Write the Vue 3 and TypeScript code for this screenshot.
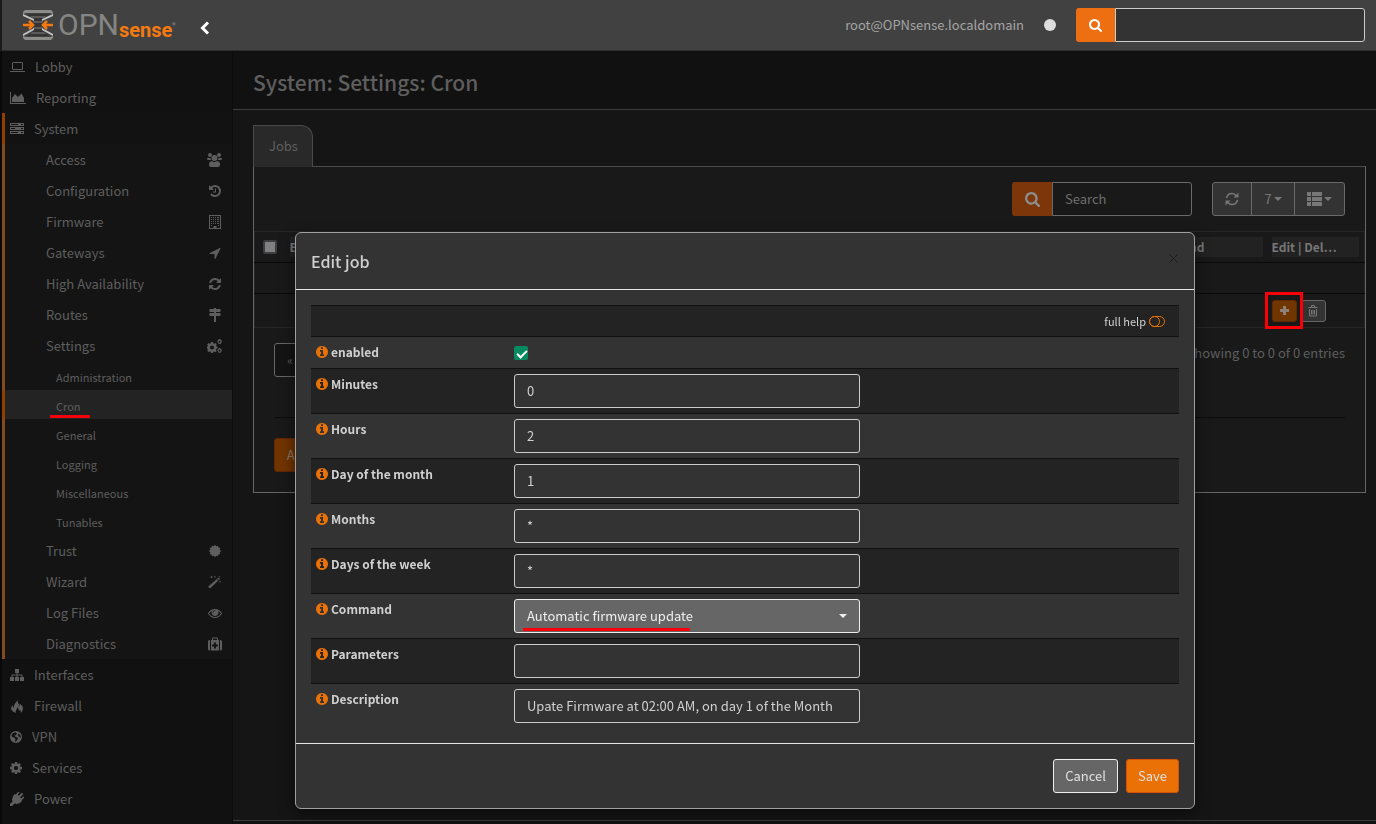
<script setup lang="ts">
import { ref } from 'vue'

interface Glyph {
  w: number
  d: string
  box?: string
  line?: boolean
}

function starburst(points: number, outer: number, inner: number, c: number): string {
  const parts: string[] = []
  for (let i = 0; i < points * 2; i++) {
    const r = i % 2 === 0 ? outer : inner
    const a = (Math.PI * i) / points
    parts.push(`${(c + r * Math.sin(a)).toFixed(2)} ${(c - r * Math.cos(a)).toFixed(2)}`)
  }
  return `M${parts.join('L')}z`
}

const glyphs: Record<string, Glyph> = {
  laptop: { w: 15, box: '0 0 15 14', d: 'M3 2.5h9q.5 0 .5.5v6q0 .5-.5.5H3q-.5 0-.5-.5V3q0-.5.5-.5zM0 11.500h15', line: true },
  area: { w: 16, box: '0 0 16 14', d: 'M0 1h1v11h15v1H0zM2 11V7l3-4 3 3 3.500-3.500L14 7v4z' },
  server: {
    w: 14,
    box: '0 0 14 14',
    d: 'M0 1h14v3H0zM0 5h14v3H0zM0 9h14v3H0zM1 2v1h7V2zM1 6v1h4V6zM1 10v1h7v-1zM11 2v1h2V2zM11 6v1h2V6zM11 10v1h2v-1z'
  },
  users: {
    w: 15,
    box: '0 0 15 14',
    d: 'M7.500 2a3 3 0 1 1 0 6 3 3 0 0 1 0-6zM3 0a2 2 0 1 1 0 4 2 2 0 0 1 0-4zM12 0a2 2 0 1 1 0 4 2 2 0 0 1 0-4zM4.500 8q3 2 6 0 2.500.5 2.500 4 0 2-2 2H4q-2 0-2-2 0-3.500 2.500-4zM1 4.500q1.500 1 2.500.3Q3.500 6.500 4.500 7H1.500Q0 7 0 6q0-1 1-1.500zM14 4.500q-1.500 1-2.500.3 0 1.700-1 2.200h3Q15 7 15 6q0-1-1-1.500z'
  },
  history: {
    w: 12,
    box: '128 128 1536 1536',
    d: 'M1664 896q0 156-61 298t-164 245-245 164-298 61q-172 0-327-72.500t-264-204.500q-7-10-6.500-22.500t8.500-20.500l137-138q10-9 25-9 16 2 23 12 73 95 179 147t225 52q104 0 198.500-40.500t163.500-109.500 109.500-163.500 40.500-198.500-40.500-198.500-109.500-163.500-163.500-109.500-198.500-40.500q-98 0-188 35.500t-160 101.500l137 138q31 30 14 69-17 40-59 40h-448q-26 0-45-19t-19-45v-448q0-42 40-59 39-17 69 14l130 129q107-101 244.500-156.500t284.500-55.500q156 0 298 61t245 164 164 245 61 298zm-640-288v448q0 14-9 23t-23 9h-320q-14 0-23-9t-9-23v-64q0-14 9-23t23-9h224v-352q0-14 9-23t23-9h64q14 0 23 9t9 23z'
  },
  building: {
    w: 12,
    box: '0 0 12 14',
    d: 'M0 0h12v14H0zM1 1v12h3.500v-2h3v2H11V1zM2 2h1v1H2zM4 2h1v1H4zM6 2h1v1H6zM8 2h2v1H8zM2 4h1v1H2zM4 4h1v1H4zM6 4h1v1H6zM8 4h2v1H8zM2 6h1v1H2zM4 6h1v1H4zM6 6h1v1H6zM8 6h2v1H8zM2 8h1v1H2zM4 8h1v1H4zM6 8h1v1H6zM8 8h2v1H8zM2 10h1v1H2zM9 10h1v1H9z'
  },
  arrow: {
    w: 12,
    box: '128 128 1536 1536',
    d: 'M1593 349l-640 1280q-17 35-57 35-5 0-15-2-22-5-35.500-22.500t-13.500-39.500v-576h-576q-22 0-39.500-13.500t-22.500-35.500 4-42 29-30l1280-640q13-7 29-7 27 0 45 19 15 14 18.500 34.500t-6.500 39.500z'
  },
  refresh: {
    w: 12,
    box: '128 128 1536 1536',
    d: 'M1639 1056q0 5-1 7-64 268-268 434.500t-478 166.500q-146 0-282.500-55t-243.500-157l-129 129q-19 19-45 19t-45-19-19-45v-448q0-26 19-45t45-19h448q26 0 45 19t19 45-19 45l-137 137q71 66 161 102t187 36q134 0 250-65t186-179q11-17 53-117 8-23 30-23h192q13 0 22.500 9.500t9.500 22.500zm25-800v448q0 26-19 45t-45 19h-448q-26 0-45-19t-19-45 19-45l138-138q-148-137-349-137-134 0-250 65t-186 179q-11 17-53 117-8 23-30 23h-199q-13 0-22.500-9.500t-9.500-22.500v-7q65-268 270-434.500t480-166.500q146 0 284 55.500t245 156.500l130-129q19-19 45-19t45 19 19 45z'
  },
  signs: { w: 12, box: '0 0 12 14', d: 'M5 0h2v1h4l1 1.500L11 4H7v1h4.500v3H7v6H5V8H1L0 6.500 1 5h4V4H.5V1H5z' },
  cogs: {
    w: 15,
    box: '0 0 15 14',
    d: 'M4 3h2l.3 1.300 1 .4L8.500 4l1.300 1.400-.7 1 .4 1L10.500 7.700v1.800l-1.200.3-.4 1 .7 1.100-1.300 1.300-1.200-.7-1 .4L6 14H4l-.3-1.200-1-.4-1.200.7L.2 11.800l.7-1.100-.4-1L0 9.500V7.700l.5-.3.4-1-.7-1L1.500 4l1.200.7 1-.4zM5 6.500a2 2 0 1 0 0 4 2 2 0 0 0 0-4zM11.700 0h1.600l.2.800 1 .5.5 1.700-.8.7-.5 1.300h-2l-.7-1.200-.8-.8.5-1.700 1-.5zM12.500 1.800a1 1 0 1 0 0 2 1 1 0 0 0 0-2zM11.700 9h1.600l.2.800 1 .5.5 1.400-.8.800-.5 1.200h-2l-.7-1.200-.8-.8.5-1.400 1-.5zM12.500 10.500a1 1 0 1 0 0 2 1 1 0 0 0 0-2z'
  },
  seal: { w: 12, box: '0 0 12 12', d: starburst(12, 6.2, 4.8, 6) },
  magic: { w: 13, box: '0 0 13 13', d: 'M10.500 2 12 3.500 2 13 0 11.300zM9 4.500l.8.800 1-1-.8-.8zM3 1l.5-1L4 1l1 .5-1 .5-.5 1L3 2l-1-.5zM6.500 1l.4-1 .4 1 .7.400-.7.400-.4 1-.4-1-.7-.4zM12 5l.4.800.6.300-.6.300L12 7.200l-.4-.8-.6-.3.600-.3zM11.600 0l.3.700.7.300-.7.300-.3.700-.3-.7-.7-.3.700-.3z' },
  eye: {
    w: 14,
    box: '0 0 1792 1792',
    d: 'M1664 960q-152-236-381-353 61 104 61 225 0 185-131.500 316.500t-316.500 131.500-316.500-131.500-131.500-316.500q0-121 61-225-229 117-381 353 133 205 333.500 326.500t434.500 121.500 434.500-121.500 333.500-326.500zm-720-384q0-20-14-34t-34-14q-125 0-214.500 89.500t-89.500 214.500q0 20 14 34t34 14 34-14 14-34q0-86 61-147t147-61q20 0 34-14t14-34zm848 384q0 34-20 69-140 230-376.500 368.500t-499.500 138.500-499.500-139-376.500-368q-20-35-20-69t20-69q140-229 376.500-368t499.500-139 499.500 139 376.500 368q20 35 20 69z'
  },
  medkit: { w: 14, box: '0 0 14 13', d: 'M4 2.500V1q0-1 1-1h4q1 0 1 1v1.500h1V13H3V2.500zM5 1v1.500h4V1zM2 2.500V13H1.500Q0 13 0 11.500V4q0-1.500 1.500-1.500zM12 2.500h.5Q14 2.500 14 4v7.500q0 1.500-1.500 1.500H12zM6 5v2H4v2h2v2h2V9h2V7H8V5z' },
  sitemap: { w: 14, box: '0 0 14 12', d: 'M5 0h4v4H7.500v1.500H12q.5 0 .5.500v2H14v4h-4V8h1.500V6.500h-4V8H9v4H5V8h1.500V6.500h-4V8H4v4H0V8h1.500V6q0-.5.5-.5h4.500V4H5z' },
  fire: { w: 14, box: '0 0 14 14', d: 'M7.500 0Q7 2 8 3.500 9.500 5.500 8.500 7.500 10 7 9.700 4.500 12.500 6.500 13 9q.3 3-2.500 5 .8-2-.5-3.500-.3 1.200-1 1.500Q9 9.500 7 8q.5 2-.8 3-1 1.200-.2 3-3-1-4.500-3-1-2.500 1-5Q2.500 8 4 9q-.5-2.500 1-4.500Q7.500 2.500 7.500 0z' },
  globe: { w: 12, box: '0 0 12 12', d: 'M6 0a6 6 0 1 1 0 12A6 6 0 0 1 6 0zM5.500 1.200Q3 1.500 1.800 3.500L1.500 5l1.500 1.500 1.500.3 1 1.200-.6 2.500h1l2.200-2.700-.8-1.600L5 5.500 4.500 4.500 6 4l1-1.300zM9 2.500 7.800 4l1 1.500L10.800 7q.2-2.500-1.800-4.500z' },
  cog: {
    w: 12,
    box: '128 128 1536 1536',
    d: 'M1152 896q0-106-75-181t-181-75-181 75-75 181 75 181 181 75 181-75 75-181zm512-109v222q0 12-8 23t-20 13l-185 28q-19 54-39 91 35 50 107 138 10 12 10 25t-9 23q-27 37-99 108t-94 71q-12 0-26-9l-138-108q-44 23-91 38-16 136-29 186-7 28-36 28h-222q-14 0-24.500-8.500t-11.500-21.500l-28-184q-49-16-90-37l-141 107q-10 9-25 9-14 0-25-11-126-114-165-168-7-10-7-23 0-12 8-23 15-21 51-66.500t54-70.500q-27-50-41-99l-183-27q-13-2-21-12.500t-8-23.500v-222q0-12 8-23t19-13l186-28q14-46 39-92-40-57-107-138-10-12-10-24 0-10 9-23 26-36 98.500-107.500t94.500-71.500q13 0 26 10l138 107q44-23 91-38 16-136 29-186 7-28 36-28h222q14 0 24.500 8.500t11.500 21.500l28 184q49 16 90 37l142-107q9-9 24-9 13 0 25 10 129 119 165 170 7 8 7 22 0 12-8 23-15 21-51 66.500t-54 70.500q26 50 41 98l183 28q13 2 21 12.500t8 23.500z'
  },
  plug: { w: 14, box: '0 0 14 14', d: 'M12.700 1.300q.7.700 0 1.400L10.200 5.200l1.200 1.200L13 4.800q.5-.4 1 0 .4.600 0 1.100l-2.400 2.400q.6.600.3 1Q8.500 13 4.500 11.500L2 14H0v-2l2.500-2.500Q1 5.500 4.700 2.100q.4-.3 1 .3L8.100 0q.5-.4 1.100 0 .4.500 0 1L7.600 2.600l1.200 1.200 2.500-2.500q.7-.7 1.400 0z' },
  help: { w: 12, box: '0 0 12 12', d: 'M6 0a6 6 0 1 1 0 12A6 6 0 0 1 6 0z' },
  info: {
    w: 12,
    box: '128 128 1536 1536',
    d: 'M1152 1376v-160q0-14-9-23t-23-9h-96v-512q0-14-9-23t-23-9h-320q-14 0-23 9t-9 23v160q0 14 9 23t23 9h96v320h-96q-14 0-23 9t-9 23v160q0 14 9 23t23 9h448q14 0 23-9t9-23zm-128-896v-160q0-14-9-23t-23-9h-192q-14 0-23 9t-9 23v160q0 14 9 23t23 9h192q14 0 23-9t9-23zm640 416q0 209-103 385.500t-279.500 279.500-385.500 103-385.500-103-279.500-279.500-103-385.500 103-385.500 279.500-279.500 385.500-103 385.500 103 279.500 279.500 103 385.500z'
  },
  search: {
    w: 14,
    box: '64 128 1664 1664',
    d: 'M1216 832q0-185-131.500-316.500t-316.500-131.500-316.500 131.500-131.500 316.500 131.500 316.500 316.500 131.500 316.500-131.500 131.500-316.500zm512 832q0 52-38 90t-90 38q-54 0-90-38l-343-342q-179 124-399 124-143 0-273.500-55.500t-225-150-150-225-55.500-273.500 55.500-273.500 150-225 225-150 273.500-55.500 273.500 55.500 225 150 150 225 55.500 273.500q0 220-124 399l343 343q37 37 37 90z'
  }
}

interface Entry {
  label: string
  icon: string
}

const before: Entry[] = [
  { label: 'Lobby', icon: 'laptop' },
  { label: 'Reporting', icon: 'area' }
]
const systemTop: Entry[] = [
  { label: 'Access', icon: 'users' },
  { label: 'Configuration', icon: 'history' },
  { label: 'Firmware', icon: 'building' },
  { label: 'Gateways', icon: 'arrow' },
  { label: 'High Availability', icon: 'refresh' },
  { label: 'Routes', icon: 'signs' },
  { label: 'Settings', icon: 'cogs' }
]
const settings: string[] = ['Administration', 'Cron', 'General', 'Logging', 'Miscellaneous', 'Tunables']
const systemBottom: Entry[] = [
  { label: 'Trust', icon: 'seal' },
  { label: 'Wizard', icon: 'magic' },
  { label: 'Log Files', icon: 'eye' },
  { label: 'Diagnostics', icon: 'medkit' }
]
const after: Entry[] = [
  { label: 'Interfaces', icon: 'sitemap' },
  { label: 'Firewall', icon: 'fire' },
  { label: 'VPN', icon: 'globe' },
  { label: 'Services', icon: 'cog' },
  { label: 'Power', icon: 'plug' }
]

interface Field {
  id: string
  label: string
  kind: 'check' | 'text' | 'select'
  value: string
}

const fields = ref<Field[]>([
  { id: 'enabled', label: 'enabled', kind: 'check', value: '' },
  { id: 'minutes', label: 'Minutes', kind: 'text', value: '0' },
  { id: 'hours', label: 'Hours', kind: 'text', value: '2' },
  { id: 'days', label: 'Day of the month', kind: 'text', value: '1' },
  { id: 'months', label: 'Months', kind: 'text', value: '*' },
  { id: 'weekdays', label: 'Days of the week', kind: 'text', value: '*' },
  { id: 'command', label: 'Command', kind: 'select', value: 'Automatic firmware update' },
  { id: 'parameters', label: 'Parameters', kind: 'text', value: '' },
  { id: 'description', label: 'Description', kind: 'text', value: 'Upate Firmware at 02:00 AM, on day 1 of the Month' }
])
const enabled = ref(true)
</script>

<template>
  <div class="page">
    <header class="topbar">
      <a class="logo" href="#" aria-label="OPNsense">
        <svg width="32" height="32" viewBox="0 0 32 32" aria-hidden="true">
          <path d="M5 5h22l-5 4v14l5 4H5l5-4V9z" fill="#343434" />
          <path d="M8 7h16l-2 2H10zM11 12h10v2H11zM11 18h10v2H11zM10 23h12l2 2H8z" fill="#5a5a5a" />
          <path d="M3 1h26l2 2v2l-3-1H4L1 5V3zM3 31h26l2-2v-2l-3 1H4l-3-1v2z" fill="#8c8c8a" />
          <path d="M1 5l11 5v2L1 7zM31 5l-11 5v2l11-5zM1 27l11-6v-2L1 25zM31 27l-11-6v-2l11 6z" fill="#c4c4c4" />
          <path d="M1 16h9M31 16h-9M7 12l4 4-4 4M25 12l-4 4 4 4" fill="none" stroke="#f47a10" stroke-width="2.500" />
        </svg>
        <span class="opn">OPN</span><span class="sense">sense</span><span class="reg">®</span>
      </a>
      <button class="collapse" type="button" aria-label="Collapse menu">
        <svg width="10" height="14" viewBox="0 0 10 14"><path d="M8 1.500 2.500 7 8 12.500" fill="none" stroke="#fff" stroke-width="3" /></svg>
      </button>
      <span class="who">root@OPNsense.localdomain</span>
      <span class="dot"></span>
      <form class="quick" @submit.prevent>
        <button class="find" type="submit" aria-label="Search menu">
          <svg width="13" height="13" :viewBox="glyphs.search.box"><path :d="glyphs.search.d" /></svg>
        </button>
        <input type="text" aria-label="Quick search" />
      </form>
    </header>

    <div class="body">
      <nav class="side">
        <a v-for="e in before" :key="e.label" href="#" class="item">
          <svg :width="glyphs[e.icon].w" height="14" :viewBox="glyphs[e.icon].box" :class="{ line: glyphs[e.icon].line }"><path :d="glyphs[e.icon].d" /></svg>
          {{ e.label }}
        </a>
        <div class="group">
          <a href="#" class="item open">
            <svg width="14" height="14" :viewBox="glyphs.server.box"><path :d="glyphs.server.d" /></svg>
            System
          </a>
          <a v-for="e in systemTop" :key="e.label" href="#" class="item sub">
            <span>{{ e.label }}</span>
            <span class="ico"><svg :width="glyphs[e.icon].w" height="14" :viewBox="glyphs[e.icon].box"><path :d="glyphs[e.icon].d" /></svg></span>
          </a>
          <a v-for="s in settings" :key="s" href="#" class="leaf" :class="{ active: s === 'Cron' }"><span>{{ s }}</span></a>
          <a v-for="e in systemBottom" :key="e.label" href="#" class="item sub">
            <span>{{ e.label }}</span>
            <span class="ico"><svg :width="glyphs[e.icon].w" height="14" :viewBox="glyphs[e.icon].box"><path :d="glyphs[e.icon].d" /></svg></span>
          </a>
        </div>
        <a v-for="e in after" :key="e.label" href="#" class="item">
          <svg :width="glyphs[e.icon].w" height="14" :viewBox="glyphs[e.icon].box"><path :d="glyphs[e.icon].d" /></svg>
          {{ e.label }}
        </a>
        <a href="#" class="item" aria-label="Help">
          <svg width="12" height="14" :viewBox="glyphs.help.box"><path :d="glyphs.help.d" /></svg>
        </a>
      </nav>

      <main class="main">
        <div class="heading"><h1>System: Settings: Cron</h1></div>
        <div class="content">
          <a href="#" class="tab">Jobs</a>
          <section class="panel">
            <div class="tools">
              <div class="filter">
                <span class="find"><svg width="15" height="15" :viewBox="glyphs.search.box"><path :d="glyphs.search.d" /></svg></span>
                <input type="text" placeholder="Search" aria-label="Search jobs" />
              </div>
              <div class="actions">
                <button type="button" aria-label="Refresh">
                  <svg width="14" height="14" viewBox="0 0 14 14">
                    <path d="M1.500 6Q2.500 1.500 7 1.500q2.500 0 4.500 2.500M12.500 8Q11.500 12.500 7 12.500q-2.500 0-4.500-2.500" fill="none" stroke="currentColor" stroke-width="1.600" />
                    <path d="M13.500.5v5h-5zM.5 13.500v-5h5z" />
                  </svg>
                </button>
                <button type="button">7<i class="caret"></i></button>
                <button type="button" aria-label="Columns">
                  <svg width="15" height="14" viewBox="0 0 15 14"><path d="M0 0h4v4H0zM5 0h10v4H5zM0 5h4v4H0zM5 5h10v4H5zM0 10h4v4H0zM5 10h10v4H5z" /></svg>
                  <i class="caret"></i>
                </button>
              </div>
            </div>

            <table class="jobs">
              <thead>
                <tr>
                  <th class="tick"><input type="checkbox" aria-label="Select all" /></th>
                  <th><span>Enabled</span></th>
                  <th class="cmd"><span>Command</span></th>
                  <th class="ops"><span>Edit | Del…</span></th>
                </tr>
              </thead>
              <tbody>
                <tr><td colspan="4"></td></tr>
              </tbody>
              <tfoot>
                <tr>
                  <td colspan="3"></td>
                  <td>
                    <div class="pair">
                      <button class="add" type="button" aria-label="Add">
                        <svg width="9" height="9" viewBox="0 0 9 9"><path d="M3 0h3v3h3v3H6v3H3V6H0V3h3z" /></svg>
                      </button>
                      <button class="del" type="button" aria-label="Delete selected">
                        <svg width="10" height="12" viewBox="0 0 10 12">
                          <path d="M.5 2.500h9M3.500 2.500v-2h3v2M1.500 4v7h7V4M3.500 5v4.500M5 5v4.500M6.500 5v4.500" fill="none" stroke="currentColor" />
                        </svg>
                      </button>
                    </div>
                  </td>
                </tr>
              </tfoot>
            </table>

            <div class="foot">
              <button class="prev" type="button">«</button>
              <span>Showing 0 to 0 of 0 entries</span>
            </div>
            <div class="rule"></div>
            <button class="apply" type="button">Apply</button>
          </section>
        </div>
        <div class="bottom"></div>
      </main>
    </div>

    <div class="overlay">
      <form class="modal" role="dialog" aria-labelledby="dialog-title" @submit.prevent>
        <div class="modal-head">
          <h2 id="dialog-title">Edit job</h2>
          <button type="button" class="close" aria-label="Close">
            <svg width="9" height="9" viewBox="0 0 9 9"><path d="M.5.5l8 8M8.500.5l-8 8" fill="none" stroke="#1c1c1c" /></svg>
          </button>
        </div>
        <div class="modal-body">
          <table class="form">
            <colgroup><col class="c1" /><col class="c2" /><col /></colgroup>
            <tbody>
              <tr class="helprow">
                <td colspan="3">
                  <button type="button" class="help">
                    full help
                    <svg width="16" height="11" viewBox="0 0 16 11">
                      <rect x=".5" y=".5" width="15" height="10" rx="5" />
                      <circle cx="5.500" cy="5.500" r="5" />
                    </svg>
                  </button>
                </td>
              </tr>
              <tr v-for="f in fields" :key="f.id">
                <td>
                  <label :for="f.id">
                    <svg width="12" height="12" :viewBox="glyphs.info.box"><path :d="glyphs.info.d" /></svg>{{ f.label }}
                  </label>
                </td>
                <td>
                  <input v-if="f.kind === 'check'" :id="f.id" v-model="enabled" type="checkbox" class="check" />
                  <input v-else-if="f.kind === 'text'" :id="f.id" v-model="f.value" type="text" />
                  <div v-else class="pick">
                    <select :id="f.id" v-model="f.value"><option>{{ f.value }}</option></select>
                    <i class="caret"></i>
                  </div>
                </td>
                <td></td>
              </tr>
            </tbody>
          </table>
        </div>
        <div class="modal-foot">
          <button type="button" class="cancel">Cancel</button>
          <button type="submit" class="save">Save</button>
        </div>
      </form>
    </div>
  </div>
</template>

<style>
body {
  margin: 0;
  background: #151515;
}
</style>

<style scoped>
* {
  box-sizing: border-box;
}
.page {
  height: 100vh;
  overflow: hidden;
  display: flex;
  flex-direction: column;
  font-family: 'Noto Sans CJK SC', 'Noto Sans', sans-serif;
  font-size: 13px;
  line-height: 20px;
  color: #5e5e5e;
}
a {
  color: inherit;
  text-decoration: none;
}
svg {
  fill: currentColor;
  fill-rule: evenodd;
  flex: none;
}
button,
input,
select {
  font: inherit;
  color: inherit;
  margin: 0;
}
button {
  display: flex;
  align-items: center;
  justify-content: center;
  padding: 0;
}
.caret {
  border: 4px solid transparent;
  border-top-color: currentColor;
  border-bottom: 0;
}

.topbar {
  flex: none;
  height: 51px;
  display: flex;
  align-items: center;
  padding: 0 11px 0 20px;
  background: #414141;
  border-bottom: 1px solid #2c2c2c;
  border-left: 2px solid #1a1a1a;
}
.logo {
  display: flex;
  align-items: center;
}
.opn {
  font: 30px/32px 'Liberation Sans Narrow', Roboto, sans-serif;
  color: #858583;
  margin-left: 4px;
}
.sense {
  font: bold 20px/22px 'Liberation Sans Narrow', Roboto, sans-serif;
  color: #f47a10;
  align-self: flex-end;
}
.reg {
  font-size: 7px;
  color: #999;
}
.collapse {
  background: none;
  border: 0;
  margin: 6px auto 0 24px;
}
.who {
  color: #a5a5a5;
}
.dot {
  width: 12px;
  height: 12px;
  border-radius: 50%;
  background: #ddd;
  margin: 0 20px;
}
.quick {
  display: flex;
  width: 289px;
  height: 34px;
}
.quick .find {
  width: 39px;
  background: #ee6f12;
  color: #fff;
  border: 0;
  border-radius: 3px 0 0 3px;
}
.quick input {
  flex: 1;
  min-width: 0;
  background: #333;
  border: 1px solid #ccc;
  border-radius: 0 3px 3px 0;
}

.body {
  flex: 1;
  min-height: 0;
  display: flex;
}
.side {
  flex: none;
  width: 233px;
  overflow: hidden;
  background: #111;
  border-left: 2px solid #090909;
  border-right: 1px solid #0b0b0b;
}
.item {
  display: flex;
  align-items: center;
  gap: 10px;
  height: 31px;
  padding: 1px 8px 0;
}
.group {
  border-left: 3px solid #834b22;
  background: #141414;
}
.group .item {
  padding-left: 5px;
}
.group .item.open {
  margin-left: -3px;
  padding-left: 5px;
  border-left: 3px solid #913f00;
  background: #121212;
}
.group .item.sub {
  justify-content: space-between;
  padding: 1px 10px 0 41px;
}
.ico {
  display: flex;
  justify-content: center;
  width: 15px;
}
.line {
  fill: none;
  stroke: currentColor;
}
.leaf {
  display: flex;
  align-items: center;
  height: 29px;
  padding: 3px 0 0 51px;
  font-size: 11px;
}
.leaf.active {
  position: relative;
  margin-left: -3px;
  border-left: 3px solid #913f00;
  background: #232323;
}
.leaf.active::after {
  content: '';
  position: absolute;
  left: 45px;
  top: 25px;
  width: 40px;
  height: 3px;
  background: #f50008;
}

.main {
  flex: 1;
  min-width: 0;
  display: flex;
  flex-direction: column;
}
.heading {
  flex: none;
  height: 59px;
  padding: 16px 20px 0;
  background: #111;
  border-bottom: 1px solid #3d3d3d;
}
h1 {
  margin: 0;
  font-size: 21px;
  font-weight: 500;
  line-height: 30px;
}
.content {
  flex: 1;
  padding: 15px 10px 0 20px;
}
.tab {
  position: relative;
  display: flex;
  align-items: center;
  width: 60px;
  height: 42px;
  padding: 0 0 1px 15px;
  margin-bottom: -1px;
  background: #292929;
  border: 1px solid #4a4a4a;
  border-bottom: 0;
  border-radius: 0 12px 0 0;
}
.panel {
  border: 1px solid #666;
  border-top-color: #4a4a4a;
  background: #191919;
  padding-bottom: 20px;
}
.tools {
  display: flex;
  justify-content: flex-end;
  gap: 20px;
  padding: 15px 20px;
  height: 64px;
  color: #777;
}
.filter {
  display: flex;
  width: 180px;
}
.filter .find {
  display: flex;
  align-items: center;
  justify-content: center;
  width: 40px;
  color: #8e8e8e;
  background: #7d360a;
  border-radius: 3px 0 0 3px;
}
.filter input {
  flex: 1;
  min-width: 0;
  padding: 0 12px;
  background: #191919;
  border: 1px solid #6a6a6a;
  border-radius: 0 3px 3px 0;
}
.filter input::placeholder {
  color: #6e6e6e;
}
.actions {
  display: flex;
  border: 1px solid #6a6a6a;
  border-radius: 3px;
  background: #333;
}
.actions button {
  gap: 2px;
  width: 38px;
  border: 0;
  background: none;
}
.actions button + button {
  width: 43px;
  border-left: 1px solid #6a6a6a;
}
.actions button:last-child {
  width: 50px;
}
.jobs {
  width: 100%;
  border-collapse: collapse;
  table-layout: fixed;
  border: 1px solid #262626;
}
.jobs th,
.jobs td {
  height: 31px;
  padding: 0 5px 0 4px;
  text-align: left;
  border-bottom: 1px solid #080808;
}
.jobs .tick {
  width: 31px;
}
.jobs .cmd {
  width: 128px;
}
.jobs .ops {
  width: 97px;
}
.jobs th span {
  display: block;
  background: #222;
  color: #777;
  font-size: 12px;
  font-weight: 700;
}
.jobs tfoot td {
  height: 34px;
  border-bottom-color: #262626;
}
.tick input {
  appearance: none;
  display: block;
  width: 14px;
  height: 14px;
  margin-left: 4px;
  background: #808080;
  border: 2px solid #3d3d42;
  border-radius: 2px;
}
.pair {
  display: flex;
  gap: 4px;
}
.pair button {
  width: 25px;
  height: 22px;
  border-radius: 3px;
}
.add {
  position: relative;
  color: #8d8077;
  background: #713500;
  border: 1px solid #622800;
}
.add::after {
  content: '';
  position: absolute;
  inset: -9px -7px -8px -8px;
  border: 3px solid #fb0007;
}
.del {
  background: #333;
  border: 1px solid #666;
  color: #777;
}
.foot {
  display: flex;
  justify-content: space-between;
  padding: 15px 20px 0;
}
.foot .prev {
  width: 32px;
  height: 34px;
  background: #141414;
  border: 1px solid #666;
  border-radius: 3px;
  font-size: 12px;
}
.rule {
  margin: 40px 20px 20px;
  border-top: 1px solid #0b0b0b;
}
.apply {
  margin-left: 20px;
  width: 60px;
  height: 34px;
  color: #8b7766;
  background: #713500;
  border: 1px solid #622800;
  border-radius: 3px;
}
.bottom {
  flex: none;
  height: 4px;
  background: #111;
  border-top: 1px solid #3d3d3d;
}

.overlay {
  position: fixed;
  inset: 0;
  display: flex;
  align-items: flex-start;
  justify-content: center;
  padding: 232px 0 0 114px;
}
.modal {
  width: 900px;
  background: #333;
  border: 1px solid #a0a0a0;
  border-radius: 6px;
  box-shadow: 0 5px 15px rgba(0, 0, 0, 0.5);
  color: #d0d0d0;
}
.modal-head {
  display: flex;
  justify-content: space-between;
  padding: 15px;
  height: 57px;
  border-bottom: 1px solid #e5e5e5;
}
h2 {
  margin: 0;
  font-size: 16px;
  font-weight: 500;
  line-height: 26px;
}
.close {
  width: 11px;
  height: 20px;
  background: none;
  border: 0;
}
.modal-body {
  padding: 15px;
}
.form {
  width: 100%;
  border-collapse: collapse;
  table-layout: fixed;
}
.c1 {
  width: 198px;
}
.c2 {
  width: 356px;
}
.form td {
  padding: 5px;
  vertical-align: top;
  border-top: 1px solid #111;
}
.form tr:nth-child(odd) {
  background: #232323;
}
.helprow .help {
  gap: 3px;
  margin-left: auto;
  margin-right: 9px;
  background: none;
  border: 0;
  font-size: 11px;
  line-height: 20px;
}
.help svg {
  fill: none;
  stroke: #ea7105;
}
.form label {
  display: flex;
  align-items: center;
  gap: 3px;
  font-size: 12px;
  font-weight: 700;
}
.form label svg {
  fill: #ea7105;
}
.form input[type='text'],
.form select {
  display: block;
  width: 100%;
  height: 34px;
  padding: 0 12px;
  background: #333;
  border: 1px solid #ccc;
  border-radius: 3px;
}
.form input[type='text'] {
  padding-bottom: 2px;
}
.form .check {
  appearance: none;
  display: block;
  width: 14px;
  height: 14px;
  margin: 4px 0 3px;
  border-radius: 2px;
  background: #078a60;
  position: relative;
}
.check:checked::after {
  content: '';
  position: absolute;
  left: 5px;
  top: 2px;
  width: 4px;
  height: 8px;
  border: solid #fff;
  border-width: 0 2px 2px 0;
  transform: rotate(45deg);
}
.pick {
  position: relative;
}
.form .pick select {
  appearance: none;
  background: #666;
  border-color: #eee;
  color: #eee;
}
.pick .caret {
  position: absolute;
  right: 13px;
  top: 15px;
  color: #eee;
}
.pick::after {
  content: '';
  position: absolute;
  left: 9px;
  top: 29px;
  width: 167px;
  height: 3px;
  background: #fb0007;
}
.modal-foot {
  display: flex;
  justify-content: flex-end;
  gap: 8px;
  padding: 15px;
  border-top: 1px solid #e5e5e5;
}
.modal-foot button {
  height: 34px;
  padding: 0 11px;
  border-radius: 3px;
  color: #e0e0e0;
}
.cancel {
  background: #666;
  border: 1px solid #eee;
}
.save {
  background: #ea7105;
  border: 1px solid #d94f00;
}
</style>
